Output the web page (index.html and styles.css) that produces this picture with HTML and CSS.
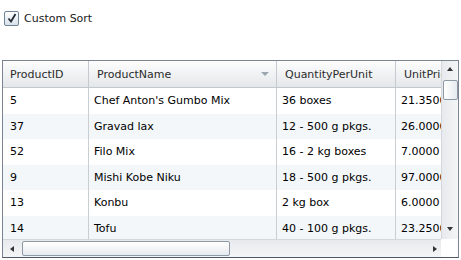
FILE: index.html
```html
<!DOCTYPE html>
<html lang="en">

<head>
    <meta charset="UTF-8">
    <title>Custom Sort</title>
    <link rel="stylesheet" href="styles.css">
</head>

<body>
    <label class="sortToggle">
        <span class="check">
            <svg width="10" height="10" viewBox="0 0 10 10"><path d="M1.5 5.5 L4 8.5 L8.5 1" fill="none" stroke="#1f2a33" stroke-width="1.8"/></svg>
        </span>
        Custom Sort
    </label>

    <div class="grid">
        <div class="view">
            <div class="row head">
                <div class="c1">ProductID</div>
                <div class="c2">ProductName <span class="sortArrow"></span></div>
                <div class="c3">QuantityPerUnit</div>
                <div class="c4">UnitPrice</div>
            </div>
            <div class="row">
                <div class="c1">5</div>
                <div class="c2">Chef Anton's Gumbo Mix</div>
                <div class="c3">36 boxes</div>
                <div class="c4">21.3500</div>
            </div>
            <div class="row alt">
                <div class="c1">37</div>
                <div class="c2">Gravad lax</div>
                <div class="c3">12 - 500 g pkgs.</div>
                <div class="c4">26.0000</div>
            </div>
            <div class="row">
                <div class="c1">52</div>
                <div class="c2">Filo Mix</div>
                <div class="c3">16 - 2 kg boxes</div>
                <div class="c4">7.0000</div>
            </div>
            <div class="row alt">
                <div class="c1">9</div>
                <div class="c2">Mishi Kobe Niku</div>
                <div class="c3">18 - 500 g pkgs.</div>
                <div class="c4">97.0000</div>
            </div>
            <div class="row">
                <div class="c1">13</div>
                <div class="c2">Konbu</div>
                <div class="c3">2 kg box</div>
                <div class="c4">6.0000</div>
            </div>
            <div class="row alt">
                <div class="c1">14</div>
                <div class="c2">Tofu</div>
                <div class="c3">40 - 100 g pkgs.</div>
                <div class="c4">23.2500</div>
            </div>
        </div>
        <div class="vscroll">
            <span class="arrow up"></span>
            <span class="vthumb"></span>
            <span class="arrow down"></span>
        </div>
        <div class="hscroll">
            <span class="arrow left"></span>
            <span class="hthumb"></span>
            <span class="arrow right"></span>
        </div>
        <div class="corner"></div>
    </div>
</body>

</html>
```

FILE: styles.css
```css
* {
    margin: 0;
    padding: 0;
    box-sizing: border-box;
}

body {
    font-family: "DejaVu Sans", Verdana, sans-serif;
    font-size: 11px;
    color: #000;
    background: #fff;
}

.sortToggle {
    display: flex;
    align-items: center;
    gap: 5px;
    padding: 11px 0 0 4px;
    height: 25px;
    color: #1b1b1b;
}

.sortToggle .check {
    width: 15px;
    height: 15px;
    border: 1px solid #6f8396;
    border-radius: 2px;
    background: linear-gradient(#ffffff, #d8e1e9);
    display: flex;
    align-items: center;
    justify-content: center;
}

.grid {
    margin: 35px 0 0 2px;
    width: 457px;
    height: 198px;
    border: 1px solid #7a8591;
    border-bottom-color: #4f5964;
    display: grid;
    grid-template-columns: 1fr 17px;
    grid-template-rows: 1fr 18px;
}

.view {
    overflow: hidden;
}

.row {
    display: flex;
    height: 25.5px;
    width: 480px;
    background: #fff;
    flex: none;
}

.row.alt {
    background: #f3f7fa;
}

.row div {
    display: flex;
    align-items: center;
    padding-left: 5px;
    white-space: nowrap;
    overflow: hidden;
    border-right: 1px solid #c9ced3;
}

.row .c1 { width: 86px; padding-left: 7px; }
.row .c2 { width: 188px; }
.row .c3 { width: 119px; }
.row .c4 { width: 70px; border-right: none; }

.row.head {
    height: 27px;
    background: linear-gradient(#fdfdfd, #e4e7ea);
    border-bottom: 1px solid #c2c8ce;
    color: #2b2b2b;
}

.row.head div {
    padding-left: 8px;
    border-right-color: #c4cad0;
}

.row.head .c1 {
    padding-left: 7px;
}

.row.head .c2 {
    justify-content: space-between;
    padding-right: 7px;
}

.sortArrow {
    width: 0;
    height: 0;
    border-left: 4px solid transparent;
    border-right: 4px solid transparent;
    border-top: 4px solid #9aa5b0;
}

.vscroll {
    background: linear-gradient(90deg, #e7eaed, #f4f5f6);
    border-left: 1px solid #d4d8dc;
    display: flex;
    flex-direction: column;
    align-items: center;
    padding: 4px 0;
}

.hscroll {
    background: linear-gradient(#e7eaed, #f4f5f6);
    border-top: 1px solid #d4d8dc;
    display: flex;
    align-items: center;
    padding: 0 4px 0 7px;
}

.corner {
    background: #fff;
}

.arrow {
    width: 0;
    height: 0;
    flex: none;
}

.arrow.up {
    border-left: 3px solid transparent;
    border-right: 3px solid transparent;
    border-bottom: 4px solid #333;
    margin-top: 2px;
}

.arrow.down {
    border-left: 3px solid transparent;
    border-right: 3px solid transparent;
    border-top: 4px solid #333;
    margin-top: auto;
    margin-bottom: 4px;
}

.arrow.left {
    border-top: 3px solid transparent;
    border-bottom: 3px solid transparent;
    border-right: 4px solid #333;
}

.arrow.right {
    border-top: 3px solid transparent;
    border-bottom: 3px solid transparent;
    border-left: 4px solid #333;
    margin-left: auto;
}

.vthumb {
    width: 15px;
    height: 20px;
    margin-top: 9px;
    border: 1px solid #8d99a5;
    border-radius: 2px;
    background: linear-gradient(90deg, #ffffff, #e6eaee);
}

.hthumb {
    width: 208px;
    height: 15px;
    margin-left: 8px;
    border: 1px solid #8d99a5;
    border-radius: 2px;
    background: linear-gradient(#ffffff, #e6eaee);
}
```
